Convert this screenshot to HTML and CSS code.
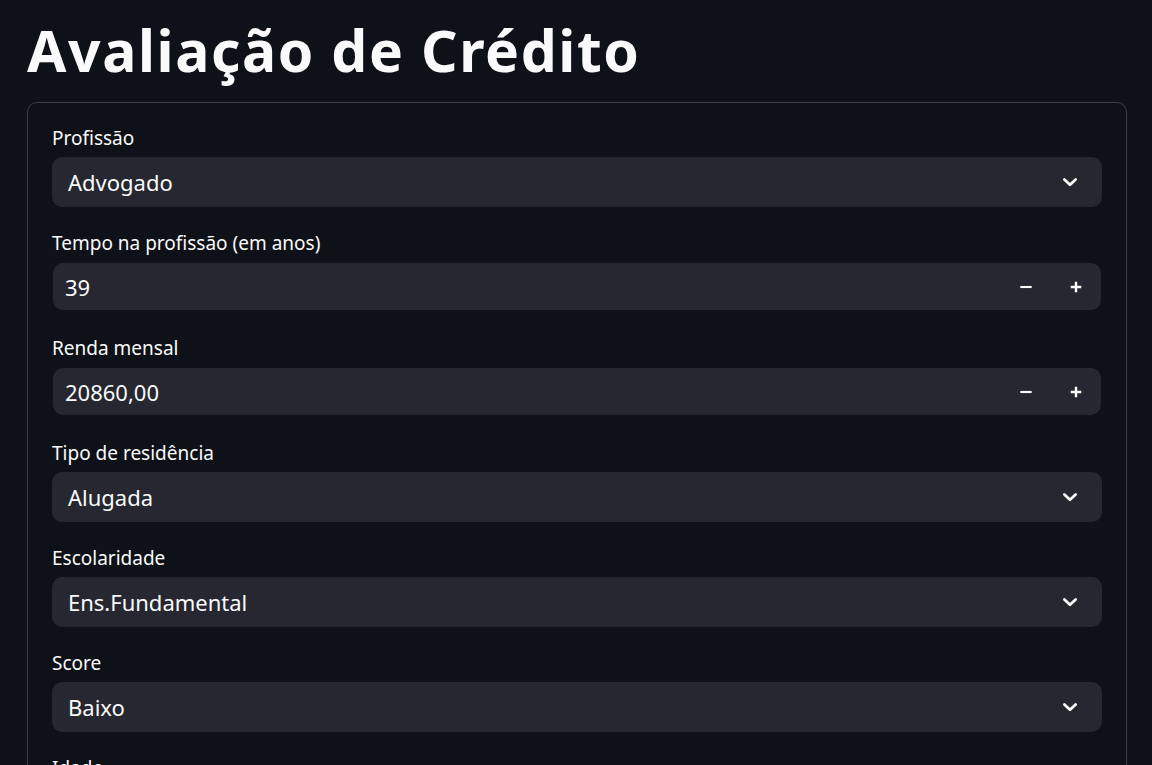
FILE: index.html
```html
<!DOCTYPE html>
<html lang="pt">
<head>
<meta charset="utf-8">
<title>Avaliação de Crédito</title>
<link rel="stylesheet" href="styles.css">
</head>
<body>
<main class="page">
  <h1 class="title">Avaliação de Crédito</h1>
  <form class="form-box">
    <div class="field">
      <label class="label">Profissão</label>
      <div class="select"><span class="value">Advogado</span>
        <svg class="chev" viewBox="0 0 16 16"><path d="M3.5 6 L8 10.2 L12.5 6" fill="none" stroke="#fafafa" stroke-width="2.2" stroke-linecap="round" stroke-linejoin="round"/></svg>
      </div>
    </div>
    <div class="field">
      <label class="label">Tempo na profissão (em anos)</label>
      <div class="number"><span class="value num">39</span>
        <span class="steps">
          <span class="step"><svg viewBox="0 0 16 16"><path d="M1.5 8 H14.5" stroke="#fafafa" stroke-width="2.4"/></svg></span>
          <span class="step"><svg viewBox="0 0 16 16"><path d="M2 8 H14 M8 2 V14" stroke="#fafafa" stroke-width="2.8"/></svg></span>
        </span>
      </div>
    </div>
    <div class="field">
      <label class="label">Renda mensal</label>
      <div class="number"><span class="value num">20860,00</span>
        <span class="steps">
          <span class="step"><svg viewBox="0 0 16 16"><path d="M1.5 8 H14.5" stroke="#fafafa" stroke-width="2.4"/></svg></span>
          <span class="step"><svg viewBox="0 0 16 16"><path d="M2 8 H14 M8 2 V14" stroke="#fafafa" stroke-width="2.8"/></svg></span>
        </span>
      </div>
    </div>
    <div class="field">
      <label class="label">Tipo de residência</label>
      <div class="select"><span class="value">Alugada</span>
        <svg class="chev" viewBox="0 0 16 16"><path d="M3.5 6 L8 10.2 L12.5 6" fill="none" stroke="#fafafa" stroke-width="2.2" stroke-linecap="round" stroke-linejoin="round"/></svg>
      </div>
    </div>
    <div class="field">
      <label class="label">Escolaridade</label>
      <div class="select"><span class="value">Ens.Fundamental</span>
        <svg class="chev" viewBox="0 0 16 16"><path d="M3.5 6 L8 10.2 L12.5 6" fill="none" stroke="#fafafa" stroke-width="2.2" stroke-linecap="round" stroke-linejoin="round"/></svg>
      </div>
    </div>
    <div class="field">
      <label class="label">Score</label>
      <div class="select"><span class="value">Baixo</span>
        <svg class="chev" viewBox="0 0 16 16"><path d="M3.5 6 L8 10.2 L12.5 6" fill="none" stroke="#fafafa" stroke-width="2.2" stroke-linecap="round" stroke-linejoin="round"/></svg>
      </div>
    </div>
    <div class="field">
      <label class="label">Idade</label>
    </div>
  </form>
</main>
</body>
</html>
```

FILE: styles.css
```css
html, body {
  margin: 0;
  padding: 0;
  background: #0e1117;
  color: #fafafa;
  font-family: "Noto Sans", "Open Sans", sans-serif;
  overflow: hidden;
  height: 765px;
}
.page {
  padding: 0 25px 0 27px;
}
.title {
  margin: 0;
  padding-top: 18px;
  font-family: "Noto Sans", sans-serif;
  font-weight: 700;
  font-size: 57px;
  line-height: 64px;
  letter-spacing: 1.6px;
  color: #fafafa;
}
.form-box {
  margin-top: 20px;
  border: 1px solid #3b3e46;
  border-radius: 10px;
  padding: 22px 24px 24px 24px;
  display: flex;
  flex-direction: column;
  gap: 23px;
}
.field {
  display: flex;
  flex-direction: column;
}
.label {
  font-size: 19px;
  line-height: 26px;
  height: 32px;
  color: #fafafa;
}
.select, .number {
  background: #262730;
  border-radius: 10px;
  display: flex;
  align-items: center;
  justify-content: space-between;
}
.select {
  height: 50px;
  padding: 0 22px 0 16px;
}
.number {
  height: 47px;
  margin: 1px 1px 2px 1px;
  padding: 0 0 0 12px;
}
.value {
  font-size: 22px;
  color: #fafafa;
}
.chev {
  width: 20px;
  height: 20px;
}
.steps {
  display: flex;
}
.step {
  width: 50px;
  height: 47px;
  display: flex;
  align-items: center;
  justify-content: center;
}
.step svg {
  width: 14px;
  height: 14px;
}
```
